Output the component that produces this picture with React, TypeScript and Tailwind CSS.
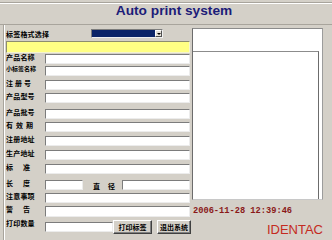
import React from "react";

const cjk = "font-[family-name:'Noto_Sans_CJK_SC',sans-serif]";

function Input({ w }: { w: string }) {
  return (
    <div
      className={`${w} h-full bg-white border border-t-[#7c7c7c] border-l-[#7c7c7c] border-r-[#ececec] border-b-[#ececec]`}
    />
  );
}

function Label({ text, spread, small }: { text: string; spread?: string; small?: boolean }) {
  if (spread) {
    return (
      <div className={`flex justify-between ${spread} -mt-[2px] leading-[10px] font-bold text-black ${cjk} text-[7px]`}>
        {text.split("").map((c, i) => (
          <span key={i}>{c}</span>
        ))}
      </div>
    );
  }
  return (
    <div
      className={`-mt-[2px] leading-[10px] font-bold text-black ${cjk} ${small ? "text-[6px]" : "text-[7px] tracking-[0.2px]"} whitespace-nowrap`}
    >
      {text}
    </div>
  );
}

function Row({
  mt,
  h,
  text,
  spread,
  small,
}: {
  mt: string;
  h: string;
  text: string;
  spread?: string;
  small?: boolean;
}) {
  return (
    <div className={`flex items-start ${mt} ${h}`}>
      <div className="w-[39px] shrink-0">
        <Label text={text} spread={spread} small={small} />
      </div>
      <Input w="w-[145px]" />
    </div>
  );
}

function Button({ text, w }: { text: string; w: string }) {
  return (
    <div
      className={`${w} h-[14px] flex items-center justify-center bg-[#d4d0c8] border border-t-white border-l-white border-r-[#404040] border-b-[#404040] shadow-[inset_-1px_-1px_0_#808080] ${cjk} text-[7px] font-bold text-black leading-none`}
    >
      {text}
    </div>
  );
}

export default function App() {
  return (
    <div className="w-[332px] h-[240px] bg-[#d4d0c8] overflow-hidden">
      <div className="h-[2px]" />
      <div className="h-[23px] border-t border-b border-t-[#a8a49c] border-b-[#a8a49c] shadow-[inset_0_1px_0_#ffffff]">
        <div className="pl-[16px] text-center text-[13.7px] leading-[16px] font-bold text-[#1c1c78] font-[family-name:'Liberation_Sans',Arial,sans-serif]">
          Auto print system
        </div>
      </div>
      <div className="flex ml-[3px] h-[215px] border-l border-l-[#a8a49c] shadow-[inset_1px_0_0_#ffffff]">
        {/* left column */}
        <div className="w-[187px] pl-[2px] flex flex-col">
          <div className="flex items-start mt-[4px] h-[9px]">
            <div className="w-[85px] shrink-0 pt-[2px]">
              <Label text="标签格式选择" />
            </div>
            <div className="w-[72px] h-[9px] flex bg-[#0c2468] border border-t-[#7c7c7c] border-l-[#7c7c7c] border-r-[#f0f0f0] border-b-[#f0f0f0]">
              <div className="flex-1" />
              <div className="w-[7px] h-full bg-[#e4e0d8] border border-t-white border-l-white border-r-[#505050] border-b-[#505050] flex items-center justify-center">
                <div className="w-0 h-0 border-l-[2px] border-r-[2px] border-t-[2px] border-l-transparent border-r-transparent border-t-black" />
              </div>
            </div>
          </div>
          <div className="mt-[3px] h-[12px] w-[184px] bg-[#ffff84] border border-t-[#8c8c70] border-l-[#8c8c70] border-r-[#f4f4d0] border-b-[#f4f4d0]" />
          <Row mt="mt-[1px]" h="h-[10px]" text="产品名称" />
          <Row mt="mt-[2px]" h="h-[10px]" text="小标签名称" small />
          <Row mt="mt-[4px]" h="h-[10px]" text="注册号" spread="w-[25px]" />
          <Row mt="mt-[3px]" h="h-[10px]" text="产品型号" />
          <Row mt="mt-[6px]" h="h-[10px]" text="产品批号" />
          <Row mt="mt-[3px]" h="h-[10px]" text="有效期" spread="w-[27px]" />
          <Row mt="mt-[4px]" h="h-[10px]" text="注册地址" />
          <Row mt="mt-[4px]" h="h-[10px]" text="生产地址" />
          <Row mt="mt-[4px]" h="h-[10px]" text="标准" spread="w-[24px]" />
          <div className="flex items-start mt-[6px] h-[10px]">
            <div className="w-[39px] shrink-0">
              <Label text="长度" spread="w-[24px]" />
            </div>
            <Input w="w-[38px]" />
            <div className="w-[39px] shrink-0 pl-[10px] pt-[3px]">
              <Label text="直径" spread="w-[22px]" />
            </div>
            <Input w="w-[68px]" />
          </div>
          <Row mt="mt-[3px]" h="h-[10px]" text="注意事项" />
          <Row mt="mt-[3px]" h="h-[11px]" text="警告" spread="w-[24px]" />
          <div className="flex items-start mt-[3px] h-[14px]">
            <div className="w-[39px] shrink-0">
              <Label text="打印数量" />
            </div>
            <div className="h-[10px] mt-[2px] flex">
              <Input w="w-[68px]" />
            </div>
            <Button text="打印标签" w="w-[39px]" />
            <div className="w-[5px]" />
            <Button text="退出系统" w="w-[34px]" />
          </div>
        </div>
        {/* right column */}
        <div className="flex-1 flex flex-col">
          <div className="ml-[1px] mt-[3px] w-[131px] h-[172px] bg-white border border-t-[#8c8c8c] border-l-[#6c6c6c] border-r-[#9c9c9c] border-b-[#c8c8c8] flex flex-col">
            <div className="h-[22px]" />
            <div className="flex-1 w-[126px] border-t border-r border-t-[#8c8c8c] border-r-[#6c6c6c]" />
          </div>
          <div className="ml-[2px] mt-[6px] text-[8.7px] leading-[10px] font-bold text-[#8a1818] font-[family-name:'Liberation_Mono','Courier_New',monospace] whitespace-nowrap">
            2006-11-28 12:39:46
          </div>
          <div className="mt-[7px] pr-[9px] text-right text-[13px] leading-[13px] text-[#c42a20] font-[family-name:'Liberation_Sans',Arial,sans-serif]">
            IDENTAC
          </div>
        </div>
      </div>
    </div>
  );
}
